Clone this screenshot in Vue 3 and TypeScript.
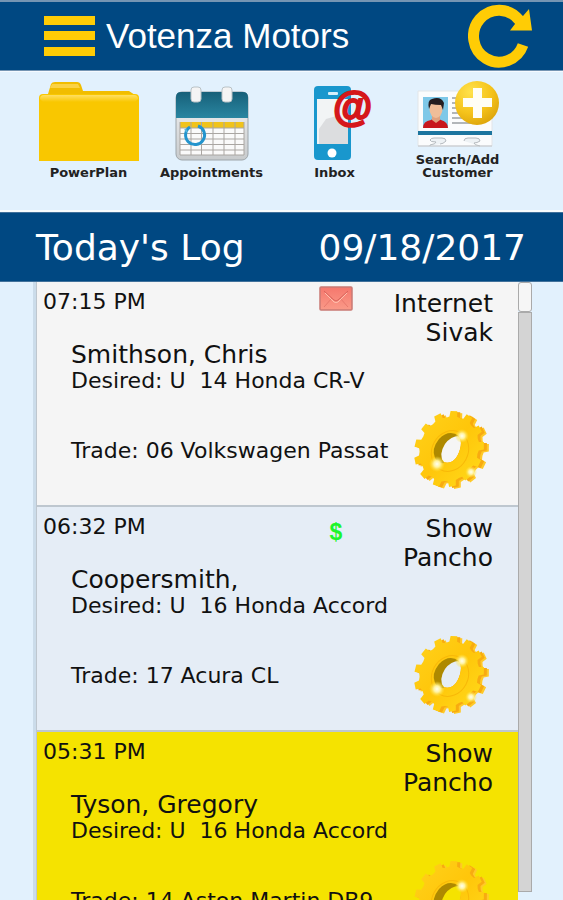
<script setup lang="ts">
type Marker = 'mail' | 'money' | 'none'

interface LogEntry {
  time: string
  marker: Marker
  source: string
  agent: string
  customer: string
  desired: string
  trade: string
  tone: 'plain' | 'tinted' | 'alert'
}

const entries: LogEntry[] = [
  { time: '07:15 PM', marker: 'mail', source: 'Internet', agent: 'Sivak', customer: 'Smithson, Chris', desired: 'U  14 Honda CR-V', trade: '06 Volkswagen Passat', tone: 'plain' },
  { time: '06:32 PM', marker: 'money', source: 'Show', agent: 'Pancho', customer: 'Coopersmith,', desired: 'U  16 Honda Accord', trade: '17 Acura CL', tone: 'tinted' },
  { time: '05:31 PM', marker: 'none', source: 'Show', agent: 'Pancho', customer: 'Tyson, Gregory', desired: 'U  16 Honda Accord', trade: '14 Aston Martin DB9', tone: 'alert' },
]

// Outline of a toothed wheel seen slightly from the side.
function wheel(cx: number, cy: number): string {
  const teeth = 13
  const tilt = 0.45
  const points: string[] = []
  const profile: [number, number][] = [[-0.5, 0.84], [-0.27, 0.86], [-0.2, 1], [0.2, 1], [0.27, 0.86]]
  for (let i = 0; i < teeth; i++) {
    for (const [offset, radius] of profile) {
      const a = ((i + offset) / teeth) * Math.PI * 2
      const x = Math.cos(a) * 34 * radius
      const y = Math.sin(a) * 39 * radius
      const px = cx + x * Math.cos(tilt) - y * Math.sin(tilt)
      const py = cy + x * Math.sin(tilt) + y * Math.cos(tilt)
      points.push(`${px.toFixed(1)} ${py.toFixed(1)}`)
    }
  }
  return `M${points.join('L')}Z`
}

const opening = 'M45.5 26.5C50 30 48 41 43 48C38 54 31 54 29 50C26 45 29 35 34 29C38 25 42 24 45.5 26.5Z'
const wheelBack = wheel(41, 41) + opening
const wheelMiddle = wheel(39, 40) + opening
const wheelFace = wheel(36, 39) + opening
</script>

<template>
  <div class="app">
    <header class="topbar">
      <button class="icon-button" type="button" aria-label="Menu">
        <svg width="51" height="40" viewBox="0 0 51 40"><path d="M0 0h51v9H0zM0 15h51v9H0zM0 31h51v9H0z" fill="#ffcc05" /></svg>
      </button>
      <h1>Votenza Motors</h1>
      <button class="icon-button" type="button" aria-label="Refresh">
        <svg width="64" height="64" viewBox="0 0 64 64">
          <path d="M55 41A25.500 26 0 1 1 51 16" fill="none" stroke="#ffcc05" stroke-width="11" />
          <path d="M61 5L64 26.500H42L47 20L46 12L55 12Z" fill="#ffcc05" />
        </svg>
      </button>
    </header>

    <nav class="shortcuts">
      <a href="#powerplan">
        <svg width="100" height="79" viewBox="0 0 100 79">
          <defs>
            <linearGradient id="folder-lip" x2="0" y2="1"><stop stop-color="#ffdf62" /><stop offset="1" stop-color="#f9c700" /></linearGradient>
          </defs>
          <path d="M9 12L12 2Q13 0 16 0H38Q41 0 42 3L44 9H90L99 15V22H1V15Z" fill="#f1bd00" />
          <path d="M13 2h26l2 4H11z" fill="#fbd244" />
          <path d="M0 16Q0 12 4 12H96Q100 12 100 16V79H0Z" fill="#f9c700" />
          <path d="M1 17Q1 13 5 13H95Q99 13 99 17L96 20H4Z" fill="url(#folder-lip)" />
        </svg>
        <span>PowerPlan</span>
      </a>
      <a href="#appointments">
        <svg width="74" height="75" viewBox="0 0 74 75">
          <defs>
            <linearGradient id="calendar-top" x2="0" y2="1"><stop stop-color="#176079" /><stop offset="1" stop-color="#2a86a1" /></linearGradient>
            <linearGradient id="calendar-body" x2="0" y2="1"><stop stop-color="#f5f5f5" /><stop offset="1" stop-color="#c8cbcd" /></linearGradient>
          </defs>
          <rect x="1" y="6" width="72" height="68" rx="6" fill="url(#calendar-body)" stroke="#9da5aa" />
          <path d="M1 32V11Q1 6 6 6H68Q73 6 73 11V32Z" fill="url(#calendar-top)" />
          <path d="M5 36H69V69H5Z" fill="#fafafa" />
          <path d="M5 36H69V42H5Z" fill="#f0c31b" />
          <path d="M5 42H69M5 47.500H69M5 53H69M5 58.500H69M5 64H69M5 69H69M5 36V69M16 36V69M26.500 36V69M38 36V69M49 36V69M60 36V69M69 36V69" fill="none" stroke="#aaa6a2" />
          <path d="M15 41A9.500 9.500 0 1 0 23 40" fill="none" stroke="#2394cd" stroke-width="3" />
          <path d="M12 46L10 43" stroke="#55b5de" stroke-width="2" />
          <rect x="16" y="1" width="10" height="15" rx="3" fill="#f4f4f4" stroke="#b9c2c6" />
          <rect x="47" y="1" width="10" height="15" rx="3" fill="#f4f4f4" stroke="#b9c2c6" />
        </svg>
        <span>Appointments</span>
      </a>
      <a href="#inbox">
        <span class="phone">
          <svg width="60" height="76" viewBox="0 0 60 76">
            <rect x="1" y="1" width="37" height="74" rx="4" fill="#1997cd" />
            <path d="M4 14H35V59H4Z" fill="#f2f4f5" />
            <path d="M6 44L13 34L27 30L35 40V59H6Z" fill="#dcdddf" />
            <rect x="15" y="7" width="10" height="3" rx="1" fill="#d7f0fa" />
            <circle cx="19" cy="68" r="4.500" fill="#fff" />
          </svg>
          <b class="at" aria-hidden="true">@</b>
        </span>
        <span>Inbox</span>
      </a>
      <a href="#customers">
        <svg width="84" height="68" viewBox="0 0 84 68">
          <defs>
            <radialGradient id="coin" cx=".35" cy=".25" r=".8"><stop stop-color="#ffe24b" /><stop offset=".6" stop-color="#f5c31b" /><stop offset="1" stop-color="#dda50b" /></radialGradient>
          </defs>
          <path d="M2 11H76V66H2Z" fill="#fbfcfd" stroke="#e2e5e8" />
          <path d="M7 17H32V48H7Z" fill="#7ec8e8" />
          <path d="M7 48Q7 41 15 40L19 37L25 40Q32 42 32 48Z" fill="#c8171c" />
          <path d="M16 34H24V40L20 43L16 40Z" fill="#e0a17e" />
          <ellipse cx="20" cy="29" rx="6.500" ry="9" fill="#efbd98" />
          <path d="M13 29Q11 20 16 19Q25 16 28 23L27 30L25 25Q19 25 15 24Z" fill="#241d20" />
          <path d="M36 18H44M36 23H44M36 28H44M36 33H48M36 38H48M36 43H63" stroke="#9b9fa3" stroke-width="1.500" />
          <path d="M2 51H76V55H2Z" fill="#1c759f" />
          <path d="M14 66V65Q20 64 20 62Q14 62 14 60Q15 58 18 58H26Q30 58 30 61Q27 64 24 64M48 61Q48 58 52 58H60Q64 58 64 61Q61 63 58 63Q58 65 64 66" fill="#eef2f5" stroke="#b5babe" />
          <path d="M2 66H76" stroke="#c2c6c9" />
          <circle cx="61" cy="23" r="22" fill="url(#coin)" />
          <path d="M57 8H66V18H76V27H66V38H57V27H47V18H57Z" fill="#fffef5" />
        </svg>
        <span class="two-line">Search/Add<br />Customer</span>
      </a>
    </nav>

    <section class="banner">
      <h2>Today's Log</h2>
      <time datetime="2017-09-18">09/18/2017</time>
    </section>

    <main class="log">
      <ul class="entries">
        <li v-for="entry in entries" :key="entry.time" class="entry" :class="entry.tone">
          <time class="when">{{ entry.time }}</time>
          <span class="marker">
            <svg v-if="entry.marker === 'mail'" width="34" height="25" viewBox="0 0 34 25" role="img" aria-label="Email">
              <defs>
                <linearGradient id="mail-fill" x2="0" y2="1"><stop stop-color="#f5776d" /><stop offset="1" stop-color="#fa9a88" /></linearGradient>
              </defs>
              <rect x="1" y="1" width="32" height="23" rx="1" fill="url(#mail-fill)" stroke="#c97a74" stroke-width="1.500" />
              <path d="M5 21L13 12M29 21L21 12" stroke="#e8796d" />
              <path d="M5 5L15 14Q17 16 19 14L29 5" fill="none" stroke="#d9655d" />
              <path d="M6 7L15 16Q17 17 19 16L28 7" fill="none" stroke="#ffc0ae" />
            </svg>
            <b v-else-if="entry.marker === 'money'">$</b>
          </span>
          <p class="source">{{ entry.source }}<br />{{ entry.agent }}</p>
          <div class="details">
            <h3>{{ entry.customer }}</h3>
            <p>Desired: {{ entry.desired }}</p>
            <p class="trade">Trade: {{ entry.trade }}</p>
          </div>
          <button class="icon-button gear" type="button" aria-label="Options">
            <svg width="78" height="80" viewBox="0 0 78 80">
              <defs>
                <linearGradient id="wheel-face" x2="1" y2="1"><stop stop-color="#ffd21c" /><stop offset=".5" stop-color="#ffc60a" /><stop offset="1" stop-color="#ffdc1c" /></linearGradient>
                <radialGradient id="shine"><stop stop-color="#fffef0" /><stop offset=".4" stop-color="#fff3a0" /><stop offset="1" stop-color="#ffe030" stop-opacity="0" /></radialGradient>
              </defs>
              <path :d="wheelBack" fill="#ffc928" fill-rule="evenodd" />
              <path :d="wheelMiddle" fill="#f8ab10" fill-rule="evenodd" />
              <path :d="wheelFace" fill="url(#wheel-face)" fill-rule="evenodd" />
              <ellipse cx="37" cy="41" rx="18" ry="21" transform="rotate(28 37 41)" fill="none" stroke="#f8b808" />
              <path d="M46 26Q36 19 26 29Q18 39 22 48Q25 54 31 53Q25 45 32 34Q38 26 46 26Z" fill="#ae8900" />
              <circle cx="49" cy="26" r="7" fill="url(#shine)" />
              <circle cx="24" cy="54" r="8" fill="url(#shine)" />
              <circle cx="58" cy="62" r="6" fill="url(#shine)" />
            </svg>
          </button>
        </li>
      </ul>
      <div class="scroll" aria-hidden="true">
        <i class="thumb"></i>
        <i class="track"></i>
      </div>
    </main>
  </div>
</template>

<style>
body {
  margin: 0;
}
</style>

<style scoped>
.app {
  display: flex;
  flex-direction: column;
  height: 100vh;
  overflow: hidden;
  background: #e2f1fd;
  color: #111;
  font-family: "DejaVu Sans", Verdana, sans-serif;
}

h1,
h2,
h3,
p,
ul {
  margin: 0;
  padding: 0;
  font-weight: 400;
}

svg {
  display: block;
}

.icon-button {
  padding: 0;
  border: 0;
  background: none;
  cursor: pointer;
}

.topbar {
  display: flex;
  flex: none;
  align-items: center;
  gap: 11px;
  box-sizing: border-box;
  height: 71px;
  padding: 0 31px 0 44px;
  border-top: 2px solid #7595b3;
  border-bottom: 1px solid #7595b3;
  background: #004882;
  color: #fff;
}

.topbar h1 {
  flex: 1;
  font: 35px/40px "Liberation Sans", Arial, sans-serif;
}

.shortcuts {
  display: grid;
  flex: none;
  grid-template-columns: repeat(4, 1fr);
  align-items: end;
  box-sizing: border-box;
  height: 141px;
  padding: 0 44px 31px 27px;
  border-top: 1px solid #f5faff;
  border-bottom: 2px solid #f7fcfd;
}

.shortcuts a {
  display: flex;
  flex-direction: column;
  align-items: center;
  gap: 5px;
  color: #222;
  font-size: 13px;
  font-weight: 700;
  line-height: 13px;
  text-align: center;
  text-decoration: none;
}

.phone {
  position: relative;
  padding-left: 16px;
}

.at {
  position: absolute;
  top: 1px;
  right: 1px;
  color: #d5171b;
  font: italic 700 40px/42px "Liberation Sans", Arial, sans-serif;
  -webkit-text-stroke: 2px #d5171b;
}

.banner {
  display: flex;
  flex: none;
  align-items: center;
  justify-content: space-between;
  box-sizing: border-box;
  height: 70px;
  padding: 2px 37px 0 36px;
  border-top: 1px solid #41719b;
  border-bottom: 1px solid #41719b;
  background: #004882;
  color: #fff;
  font-size: 36px;
  line-height: 40px;
}

.banner h2 {
  font-size: 36px;
}

.log {
  display: flex;
  flex: 1;
  min-height: 0;
  padding: 0 31px 0 33px;
}

.entries {
  flex: 1;
  overflow-y: auto;
  border-left: 3px solid #cbdcea;
  list-style: none;
  scrollbar-width: none;
}

.entry {
  display: grid;
  grid-template-columns: 1fr 34px 60px 80px;
  grid-template-rows: 60px 1fr;
  box-sizing: border-box;
  height: 225px;
  padding: 0 25px 0 6px;
  border-bottom: 2px solid #bec7cf;
  border-left: 1px solid #bec7cf;
  font-size: 22px;
  line-height: 26px;
}

.plain {
  background: #f5f5f5;
}

.tinted {
  background: #e5edf6;
}

.alert {
  background: #f5e300;
}

.when {
  padding-top: 7px;
}

.marker {
  padding-top: 4px;
  color: #1cf52c;
  text-align: center;
}

.marker b {
  display: block;
  padding-top: 8px;
  font: 700 23px/26px "Liberation Sans", Arial, sans-serif;
}

.source {
  grid-column: 3 / 5;
  padding-top: 7px;
  font-size: 25px;
  line-height: 29px;
  text-align: right;
}

.details {
  grid-column: 1 / 4;
  padding-left: 28px;
  white-space: pre;
}

.details h3 {
  font-size: 25px;
  line-height: 26px;
}

.trade {
  padding-top: 44px;
}

.gear {
  align-self: end;
  margin-bottom: 15px;
}

.scroll {
  display: flex;
  flex: none;
  flex-direction: column;
  width: 14px;
  padding-bottom: 8px;
}

.thumb,
.track {
  box-sizing: border-box;
  border: 1px solid #aaa;
}

.thumb {
  height: 30px;
  border-radius: 3px;
  background: #f6f6f6;
}

.track {
  flex: 1;
  background: #d4d4d4;
}
</style>
